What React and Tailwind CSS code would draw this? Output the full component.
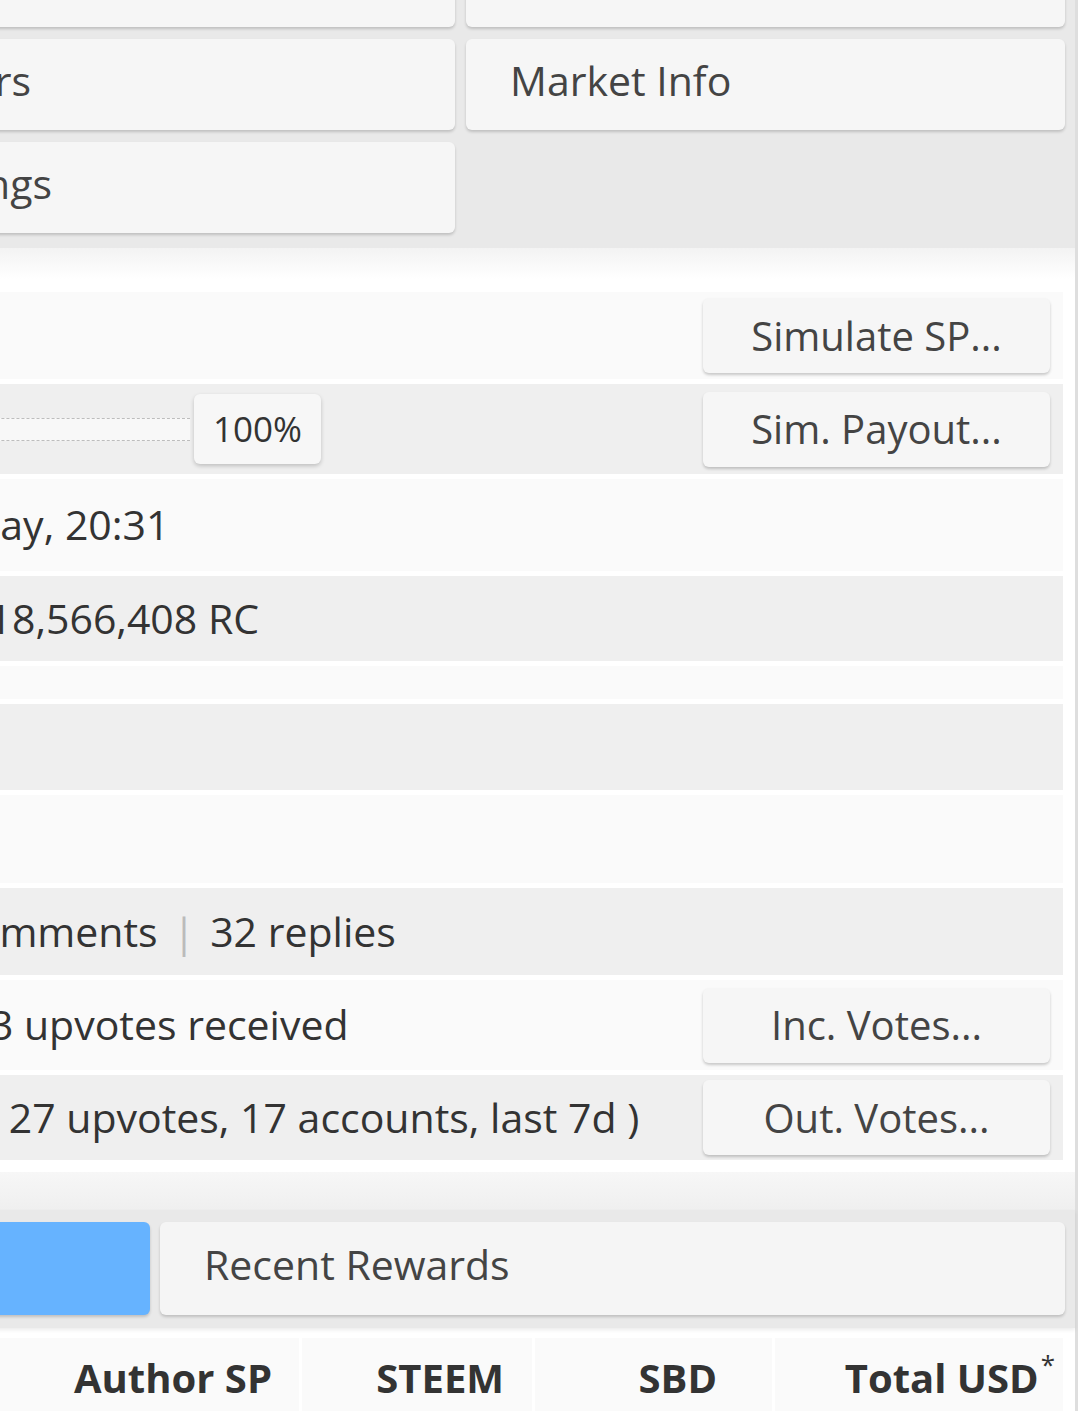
import React from 'react';

const MenuButton = ({ label }) => (
  <div className="h-[91px] rounded-[6px] bg-[#f6f6f6] shadow-[0_2px_3px_rgba(0,0,0,0.18)] flex items-center pl-[44px] pb-[8px] text-[41px] text-[#444] whitespace-nowrap overflow-hidden">
    {label}
  </div>
);

const SideButton = ({ label }) => (
  <div className="w-[347px] h-[75px] rounded-[6px] bg-[#f6f6f6] shadow-[0_2px_3px_rgba(0,0,0,0.2)] flex items-center justify-center text-[40px] text-[#444] whitespace-nowrap">
    {label}
  </div>
);

const Row = ({ dark, h, children, button }) => (
  <div className={`flex ${h} ${dark ? 'bg-[#efefef]' : 'bg-[#fafafa]'}`}>
    <div className="w-[791px] flex items-center overflow-hidden whitespace-nowrap text-[41px] text-[#333]">
      {children}
    </div>
    <div className="flex-1 flex items-center justify-end pr-[13px]">
      {button && <SideButton label={button} />}
    </div>
  </div>
);

export default function App() {
  return (
    <div className="w-[1080px] h-[1411px] overflow-hidden bg-white font-['Open_Sans',sans-serif]">
      <div className="w-[1222px] -ml-[144px] border-r-[3px] border-[#dedede]">
        {/* account menu */}
        <div className="-mt-[76px] bg-[#e9e9e9] pt-[12px] pb-[15px] pr-[10px]">
          <div className="grid grid-cols-[599px_599px] gap-x-[11px] gap-y-[12px]">
            <div className="h-[91px] rounded-[6px] bg-[#f6f6f6] shadow-[0_2px_3px_rgba(0,0,0,0.18)]" />
            <div className="h-[91px] rounded-[6px] bg-[#f6f6f6] shadow-[0_2px_3px_rgba(0,0,0,0.18)]" />
            <MenuButton label="Others" />
            <MenuButton label="Market Info" />
            <MenuButton label="Settings" />
          </div>
        </div>

        <div className="h-[31px] bg-gradient-to-b from-[#f3f3f3] to-white" />

        {/* account stats */}
        <div className="bg-white pt-[13px] pb-[12px] pr-[12px] flex flex-col gap-[5px]">
          <Row h="h-[87px]" button="Simulate SP..." />
          <Row dark h="h-[90px]" button="Sim. Payout...">
            <div className="flex items-center ml-[20px]">
              <div className="w-[314px] h-[23px] border-y border-dashed border-[#bdbdbd] bg-[#f8f8f8]" />
              <div className="w-[127px] h-[70px] ml-[4px] rounded-[6px] bg-[#f7f7f7] shadow-[0_2px_4px_rgba(0,0,0,0.2)] flex items-center justify-center text-[35px] text-[#333]">
                100%
              </div>
            </div>
          </Row>
          <Row h="h-[92px]">
            <span className="ml-[72px]">Today, 20:31</span>
          </Row>
          <Row dark h="h-[85px]">
            <span className="ml-[75px]">1,218,566,408 RC</span>
          </Row>
          <Row h="h-[33px]" />
          <Row dark h="h-[86px]" />
          <Row h="h-[88px]" />
          <Row dark h="h-[87px]">
            <span className="ml-[65px]">8 comments</span>
            <span className="mx-[15px] text-[#bbb]">|</span>
            <span>32 replies</span>
          </Row>
          <Row h="h-[90px]" button="Inc. Votes...">
            <span className="ml-[87px]">183 upvotes received</span>
          </Row>
          <Row dark h="h-[85px]" button="Out. Votes...">
            <span className="ml-[130px]">( 27 upvotes, 17 accounts, last 7d )</span>
          </Row>
        </div>

        <div className="h-[38px] bg-gradient-to-b from-[#f7f7f7] to-[#efefef]" />

        {/* tabs */}
        <div className="bg-[#e9e9e9] pt-[12px] pb-[13px] pr-[10px] flex gap-[10px] shadow-[0_2px_4px_rgba(0,0,0,0.08)]">
          <div className="w-[294px] h-[93px] rounded-[6px] bg-[#66b3ff] shadow-[0_2px_3px_rgba(0,0,0,0.18)]" />
          <div className="flex-1 h-[93px] rounded-[6px] bg-[#f5f5f5] shadow-[0_2px_3px_rgba(0,0,0,0.18)] flex items-center pl-[44px] pb-[7px] text-[41px] text-[#444]">
            Recent Rewards
          </div>
        </div>

        {/* table header */}
        <div className="mt-[10px] pr-[12px] flex gap-[3px] h-[80px] text-[40px] font-bold text-[#333]">
          <div className="w-[443px] bg-[#fafafa] flex items-center justify-end pr-[27px]">Author SP</div>
          <div className="w-[230px] bg-[#fafafa] flex items-center justify-end pr-[28px]">STEEM</div>
          <div className="w-[237px] bg-[#fafafa] flex items-center justify-end pr-[55px]">SBD</div>
          <div className="flex-1 bg-[#fafafa] flex items-center justify-end pr-[8px]">
            Total USD<sup className="text-[26px] font-normal -top-[14px] ml-[2px]">*</sup>
          </div>
        </div>
      </div>
    </div>
  );
}
